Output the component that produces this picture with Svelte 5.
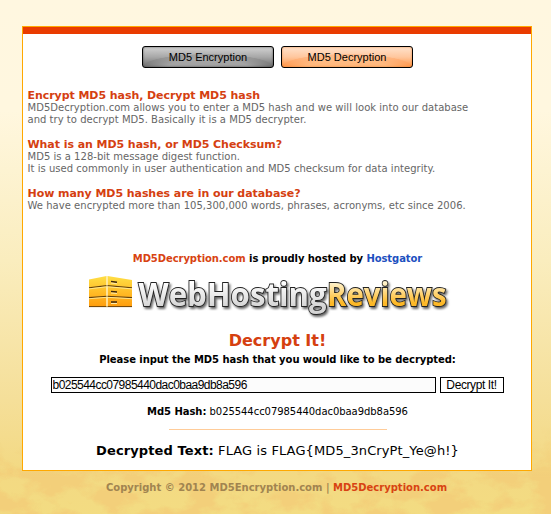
<script>
  const sections = [
    {
      title: 'Encrypt MD5 hash, Decrypt MD5 hash',
      lines: [
        'MD5Decryption.com allows you to enter a MD5 hash and we will look into our database',
        'and try to decrypt MD5. Basically it is a MD5 decrypter.'
      ]
    },
    {
      title: 'What is an MD5 hash, or MD5 Checksum?',
      lines: [
        'MD5 is a 128-bit message digest function.',
        'It is used commonly in user authentication and MD5 checksum for data integrity.'
      ]
    },
    {
      title: 'How many MD5 hashes are in our database?',
      lines: ['We have encrypted more than 105,300,000 words, phrases, acronyms, etc since 2006.']
    }
  ];
  let hash = 'b025544cc07985440dac0baa9db8a596';
</script>

<div class="page">
  <svg class="texture" width="551" height="514" aria-hidden="true">
    <defs>
      <filter id="grain" x="0" y="0" width="100%" height="100%" color-interpolation-filters="sRGB">
        <feTurbulence type="fractalNoise" baseFrequency="0.028 0.045" numOctaves="4" seed="8" />
        <feColorMatrix values="0 0 0 0 .953  0 0 0 0 .80  0 0 0 0 .47  5 0 0 0 -2.1" />
      </filter>
      <linearGradient id="fade" x1="0" y1="0" x2="0" y2="1">
        <stop offset=".83" stop-color="#000" />
        <stop offset=".93" stop-color="#fff" />
      </linearGradient>
      <mask id="low"><rect width="551" height="514" fill="url(#fade)" /></mask>
    </defs>
    <g mask="url(#low)"><rect width="551" height="514" filter="url(#grain)" opacity=".8" /></g>
  </svg>
  <main>
    <div class="bar"></div>
    <nav>
      <button class="tab gray">MD5 Encryption</button>
      <button class="tab orange">MD5 Decryption</button>
    </nav>
    <div class="info">
      {#each sections as s}
        <section>
          <h2>{s.title}</h2>
          {#each s.lines as line}<p>{line}</p>{/each}
        </section>
      {/each}
    </div>
    <div class="hosted"><span class="red">MD5Decryption.com</span> is proudly hosted by <span class="blue">Hostgator</span></div>
    <svg class="logo" width="370" height="50" viewBox="85 272 370 50">
      <defs>
        <linearGradient id="silver" x1="0" y1="0" x2="0" y2="1">
          <stop offset=".25" stop-color="#fff" /><stop offset=".8" stop-color="#d5d5d5" />
        </linearGradient>
        <linearGradient id="gold" x1="0" y1="0" x2="0" y2="1">
          <stop offset=".25" stop-color="#fff3cd" /><stop offset=".72" stop-color="#fdb827" />
        </linearGradient>
        <linearGradient id="box" gradientUnits="userSpaceOnUse" x1="0" y1="276" x2="0" y2="307">
          <stop offset="0" stop-color="#ffdf45" /><stop offset="1" stop-color="#ff9c0c" />
        </linearGradient>
        <filter id="shadow" x="-5%" y="-10%" width="112%" height="130%">
          <feDropShadow dx="1.500" dy="2" stdDeviation="1" flood-color="#000" flood-opacity=".6" />
        </filter>
      </defs>
      <g fill="url(#box)">
        <path d="M89 279.500 106.500 276V307H89Z" />
        <path d="M107.500 276 132 280V307H107.500Z" />
      </g>
      <path d="M89 287.800 107 285.600 132 287.800M89 297.600 107 296.200 132 297.600" fill="none" stroke="#62400c" stroke-width="1.100" />
      <path d="M89 288.900 107 286.700 132 288.900M89 298.700 107 297.300 132 298.700" fill="none" stroke="#fff0a8" stroke-width=".8" />
      <path d="M89 306.600H132" stroke="#6b4209" />
      <path d="M107 276V307" stroke="#ffeaa0" stroke-width="1" />
      <path d="M111 281.500 117 282.300M111 291.500 117 292M111 302H117" stroke="#3d270c" stroke-width="1.500" />
      <path d="M111 283 117 283.800M111 293 117 293.500M111 303.500H117" stroke="#ffe9a4" stroke-width="1" />
      <g class="brand" filter="url(#shadow)">
        <text x="138.500" y="306" textLength="188" lengthAdjust="spacingAndGlyphs" fill="url(#silver)">WebHosting</text>
        <text x="327" y="306" textLength="119.500" lengthAdjust="spacingAndGlyphs" fill="url(#gold)">Reviews</text>
      </g>
    </svg>
    <h1>Decrypt It!</h1>
    <div class="prompt">Please input the MD5 hash that you would like to be decrypted:</div>
    <div class="form">
      <input type="text" bind:value={hash} spellcheck="false" />
      <button class="go">Decrypt It!</button>
    </div>
    <div class="result"><b>Md5 Hash:</b> <span>{hash}</span></div>
    <div class="rule"></div>
    <div class="answer"><b>Decrypted Text:</b> <span>{'FLAG is FLAG{MD5_3nCryPt_Ye@h!}'}</span></div>
  </main>
  <footer>Copyright © 2012 MD5Encryption.com | <span class="red">MD5Decryption.com</span></footer>
</div>

<style>
  :global(body) { margin: 0; }
  .page {
    position: relative; box-sizing: border-box; width: 551px; height: 514px; padding-top: 26px; overflow: hidden;
    background: linear-gradient(#fff7e0 0, #fff7df 110px, #faedbe 260px, #f5df99 400px, #f3d983 470px, #f3dc82 514px);
    font-family: Verdana, "DejaVu Sans", sans-serif; color: #000; white-space: nowrap;
  }
  .texture { position: absolute; left: 0; top: 0; }
  main {
    position: relative; box-sizing: border-box; width: 510px; height: 445px; margin-left: 22px;
    border: 1px solid #ffa800; background: #fff; display: flex; flex-direction: column; align-items: center;
  }
  .bar { width: 100%; height: 7px; background: #e93b00; flex: none; }
  nav { display: flex; gap: 7px; margin: 12px 0 0 1px; flex: none; }
  .tab {
    box-sizing: border-box; width: 132px; height: 22px; padding: 0; border: 1px solid #000; border-radius: 3px;
    font: 11px/20px "Liberation Sans", Arial, sans-serif; color: #000;
  }
  .gray {
    background: radial-gradient(ellipse 66px 13px at 50% 100%, rgba(170,170,170,.85) 60%, rgba(120,120,120,.3) 97%, transparent 100%), linear-gradient(#d2d2d2, #a8a8a8 50%, #6c6c6c);
    box-shadow: inset 0 0 2px #444;
  }
  .orange {
    background: radial-gradient(ellipse 66px 13px at 50% 100%, rgba(255,190,135,.8) 60%, rgba(255,150,80,.3) 97%, transparent 100%), linear-gradient(#ffe2cc, #ffc79e 50%, #ff9443);
    box-shadow: inset 0 0 2px #e98135;
  }
  .info { align-self: stretch; margin: 21px 0 0 4.5px; height: 135px; flex: none; }
  section { margin-bottom: 12px; }
  h2 { margin: 0; font-size: 11px; line-height: 13px; height: 13px; color: #d54010; letter-spacing: -.06px; }
  p { margin: 0; font-size: 10px; line-height: 12px; height: 12px; color: #666; letter-spacing: .03px; }
  .red { color: #d84312; }
  .blue { color: #1c50c0; }
  .hosted { font-size: 10px; font-weight: bold; line-height: 14px; height: 14px; margin: 28px 0 0 1px; letter-spacing: -.07px; }
  .logo { display: block; flex: none; margin: 6px 0 0 -14px; overflow: visible; }
  .brand text { font: bold 32px "Open Sans", "Noto Sans", sans-serif; stroke: #222; stroke-width: 1.8; paint-order: stroke; }
  h1 { margin: 9px 0 0 1px; font-size: 16px; line-height: 20px; height: 20px; color: #d54010; }
  .prompt { font-size: 10px; font-weight: bold; line-height: 14px; height: 14px; margin: 2px 0 0 1px; letter-spacing: -.06px; }
  .form { display: flex; gap: 4px; margin-top: 10px; }
  input {
    box-sizing: border-box; width: 385px; height: 16px; margin: 0; border: 1px solid #000; border-radius: 0; padding: 0 1px;
    background: #fcfcfc; font: 12px "Liberation Sans", Arial, sans-serif; letter-spacing: -.54px; color: #000;
  }
  .go {
    box-sizing: border-box; width: 64px; height: 16px; padding: 0; border: 1px solid #000; border-radius: 0;
    background: #fff; font: 12px/14px "Liberation Sans", Arial, sans-serif; letter-spacing: -.4px; color: #000;
  }
  .result { font-size: 10px; line-height: 14px; height: 14px; margin: 12px 0 0 1px; letter-spacing: -.05px; }
  .rule { width: 218px; height: 1px; background: #ffcc99; margin: 10px 0 0 1px; flex: none; }
  .answer { font-size: 13px; line-height: 18px; height: 18px; margin: 12px 0 0 1px; letter-spacing: .11px; }
  footer { position: relative; margin-top: 10px; width: 553px; text-align: center; font-size: 10px; font-weight: bold; line-height: 14px; color: #a18450; }
</style>
